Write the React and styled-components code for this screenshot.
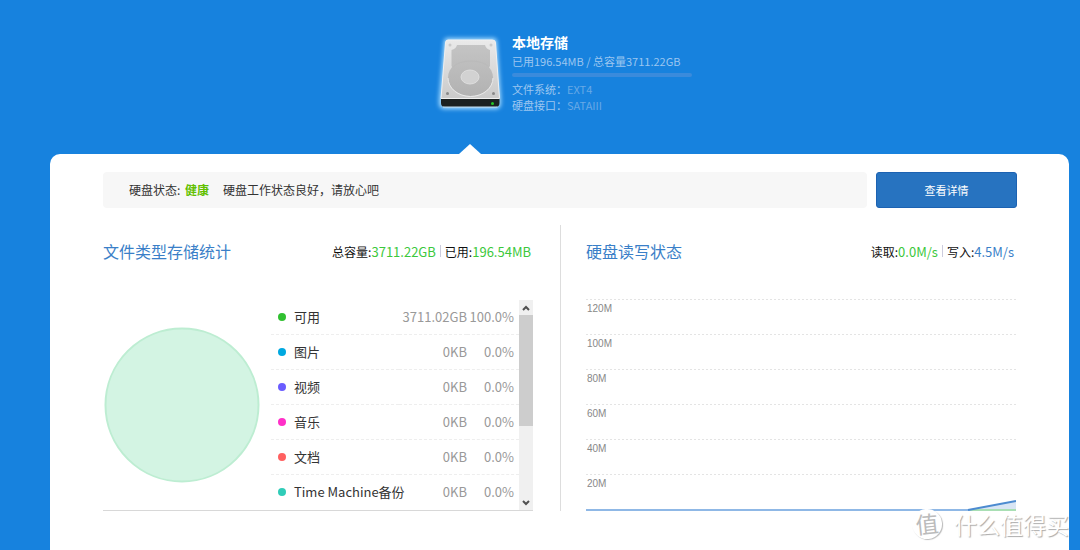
import React, { useState } from 'react';
import styled, { createGlobalStyle } from 'styled-components';

const fileTypes = [
    { name: '可用', size: '3711.02GB', percent: '100.0%', color: '#30c030' },
    { name: '图片', size: '0KB', percent: '0.0%', color: '#00a8e0' },
    { name: '视频', size: '0KB', percent: '0.0%', color: '#6a5cff' },
    { name: '音乐', size: '0KB', percent: '0.0%', color: '#ff30c8' },
    { name: '文档', size: '0KB', percent: '0.0%', color: '#ff6060' },
    { name: 'Time Machine备份', size: '0KB', percent: '0.0%', color: '#30ccb8' },
];

const speedMarks = ['120M', '100M', '80M', '60M', '40M', '20M'];

function DiskIcon() {
    return (
        <svg width="72" height="84" viewBox="0 0 72 84" aria-hidden="true">
            <defs>
                <linearGradient id="case" x1="0" y1="0" x2="0" y2="1">
                    <stop offset="0" stopColor="#eaeaea" />
                    <stop offset="0.5" stopColor="#dadada" />
                    <stop offset="1" stopColor="#cacaca" />
                </linearGradient>
                <linearGradient id="plate" gradientUnits="userSpaceOnUse" x1="0" y1="13" x2="0" y2="64">
                    <stop offset="0" stopColor="#c4c4c4" />
                    <stop offset="1" stopColor="#b2b2b2" />
                </linearGradient>
                <filter id="glow" x="-20%" y="-20%" width="140%" height="140%">
                    <feGaussianBlur stdDeviation="2" />
                </filter>
            </defs>
            <path d="M14 7H59Q62 7 62 10L66 67V71Q66 76 61 76H11Q6 76 6 71V67L11 10Q11 7 14 7Z" fill="#a8dcff" stroke="#a8dcff" strokeWidth="2" filter="url(#glow)" />
            <path d="M7 65H65.500V71Q65.500 75 61.500 75H11Q7 75 7 71Z" fill="#1b2020" />
            <path d="M9 75H63.500" stroke="#c8e0f0" />
            <path d="M14 8H58.500Q61.500 8 61.500 11L65.500 66.500H7L11.500 11Q11.500 8 14 8Z" fill="url(#case)" stroke="#f0f0f0" />
            <ellipse cx="36.500" cy="45.500" rx="22.500" ry="18.500" fill="url(#plate)" />
            <path d="M14 46A22.500 18.500 0 0 0 59 46" fill="none" stroke="#e8e8e8" />
            <path d="M23 13H51Q52 17 56 18V34Q54 38 50 40H23Q19 38 17.500 34V18Q22 17 23 13Z" fill="url(#plate)" />
            <path d="M19 35Q25 29 37 29T55 35" fill="none" stroke="#bababa" />
            <ellipse cx="36" cy="45" rx="9" ry="7" fill="#d2d2d2" stroke="#dedede" />
            <circle cx="16" cy="13" r="1.500" fill="#cacaca" />
            <circle cx="57" cy="13" r="1.500" fill="#cacaca" />
            <circle cx="13.500" cy="61.500" r="1.500" fill="#888" />
            <circle cx="59.500" cy="61.500" r="1.500" fill="#888" />
            <circle cx="58.500" cy="71.500" r="1.500" fill="#24c624" />
        </svg>
    );
}

function FileStats() {
    return (
        <StatsBody>
            <PieBox>
                <svg width="156" height="156" viewBox="0 0 156 156" role="img" aria-label="可用 100.0%">
                    <circle cx="78" cy="78" r="76.500" fill="#d3f4e3" stroke="#bdedd2" strokeWidth="2" />
                </svg>
            </PieBox>
            <TypeTable>
                <tbody>
                    {fileTypes.map((t) => (
                        <tr key={t.name}>
                            <TypeName scope="row"><Dot $color={t.color} />{t.name}</TypeName>
                            <TypeValue $width="68px">{t.size}</TypeValue>
                            <TypeValue $width="52px">{t.percent}</TypeValue>
                        </tr>
                    ))}
                </tbody>
            </TypeTable>
            <ScrollBar>
                <ScrollButton type="button" aria-label="向上">
                    <svg width="8" height="6" viewBox="0 0 8 6"><path d="M1 5L4 2L7 5" /></svg>
                </ScrollButton>
                <Thumb />
                <ScrollButton type="button" aria-label="向下">
                    <svg width="8" height="6" viewBox="0 0 8 6"><path d="M1 1L4 4L7 1" /></svg>
                </ScrollButton>
            </ScrollBar>
        </StatsBody>
    );
}

function SpeedChart() {
    return (
        <Chart>
            {speedMarks.map((m) => <Mark key={m}>{m}</Mark>)}
            <ChartLine viewBox="0 0 430 212" preserveAspectRatio="none" aria-hidden="true">
                <path d="M382 211L430 202V211Z" fill="#d8e5f4" />
                <path d="M382 211H430" stroke="#a9dfb4" strokeWidth="2" />
                <path d="M0 211H384" stroke="#8fb8e6" strokeWidth="2" />
                <path d="M382 211L430 202" stroke="#4c8bd0" strokeWidth="2" />
            </ChartLine>
        </Chart>
    );
}

export default function App() {

    const [details, setDetails] = useState(false)

    return (
        <Page>
            <GlobalStyle />
            <Header>
                <DiskColumn>
                    <DiskIcon />
                    <Arrow />
                </DiskColumn>
                <DiskInfo>
                    <DiskName>本地存储</DiskName>
                    <InfoLine>已用196.54MB / 总容量3711.22GB</InfoLine>
                    <UsageBar />
                    <InfoLine>文件系统：<span>EXT4</span></InfoLine>
                    <InfoLine>硬盘接口：<span>SATAIII</span></InfoLine>
                </DiskInfo>
            </Header>

            <Panel>
                <StatusRow>
                    <StatusBar>
                        硬盘状态: <b>健康</b>
                        <span>硬盘工作状态良好，请放心吧</span>
                    </StatusBar>
                    <DetailButton type="button" aria-pressed={details} onClick={() => setDetails(!details)}>
                        查看详情
                    </DetailButton>
                </StatusRow>

                <Columns>
                    <Column $left>
                        <ColumnHead>
                            <h2>文件类型存储统计</h2>
                            <Figures>
                                总容量:<Figure>3711.22GB</Figure>
                                <Separator />
                                已用:<Figure>196.54MB</Figure>
                            </Figures>
                        </ColumnHead>
                        <FileStats />
                    </Column>
                    <Column>
                        <ColumnHead>
                            <h2>硬盘读写状态</h2>
                            <Figures>
                                读取:<Figure>0.0M/s</Figure>
                                <Separator />
                                写入:<Figure $blue>4.5M/s</Figure>
                            </Figures>
                        </ColumnHead>
                        <SpeedChart />
                    </Column>
                </Columns>
            </Panel>

            <Watermark>
                <Seal>值</Seal>
                什么值得买
            </Watermark>
        </Page>
    );
}

const GlobalStyle = createGlobalStyle`
* {
    box-sizing: border-box;
}
body {
    margin: 0;
    background: #1782de;
    font-family: "Noto Sans CJK SC", sans-serif;
    font-size: 12px;
    color: #333;
}
`;

const Page = styled.div`
    position: relative;
    display: flex;
    flex-direction: column;
    min-height: 100vh;
    overflow: hidden;
`;

const Header = styled.header`
    display: flex;
    justify-content: center;
    gap: 6px;
    height: 154px;
    padding: 32px 0 0 46px;
`;

const DiskColumn = styled.div`
    display: flex;
    flex-direction: column;
    align-items: center;
    justify-content: space-between;
`;

const Arrow = styled.div`
    border: 11px solid transparent;
    border-top: 0;
    border-bottom-color: #fff;
    border-bottom-width: 10px;
`;

const DiskInfo = styled.div`
    width: 180px;
`;

const DiskName = styled.h1`
    margin: 0;
    font-size: 14px;
    line-height: 21px;
    color: #fff;
`;

const InfoLine = styled.p`
    margin: 0;
    font-size: 11px;
    line-height: 16px;
    color: #9cc6f0;
    white-space: nowrap;

    span {
        color: #68a9e6;
    }
`;

const UsageBar = styled.div`
    height: 4px;
    margin: 4px 0 4px;
    border-radius: 2px;
    background: #3a8bdc;
`;

const Panel = styled.main`
    flex: 1;
    margin: 0 11px 0 50px;
    padding: 18px 52px 18px 53px;
    border-radius: 10px 10px 0 0;
    background: #fff;
`;

const StatusRow = styled.div`
    display: flex;
    gap: 9px;
    margin-bottom: 17px;
`;

const StatusBar = styled.div`
    flex: 1;
    height: 36px;
    padding: 0 26px;
    border-radius: 4px;
    background: #f7f7f7;
    line-height: 36px;

    b {
        margin-left: 2px;
        color: #62c000;
    }
    span {
        margin-left: 14px;
    }
`;

const DetailButton = styled.button`
    width: 141px;
    height: 36px;
    border: 1px solid #1c62b2;
    border-radius: 3px;
    background: #2773c0;
    color: #fff;
    font-family: inherit;
    font-size: 11px;
    cursor: pointer;
`;

const Columns = styled.div`
    display: flex;
    padding-right: 1px;
`;

const Column = styled.section`
    flex: 1;
    min-width: 0;
    padding: ${(p) => (p.$left ? '0 27px 0 0' : '0 0 0 25px')};
    border-right: ${(p) => (p.$left ? '1px solid #ddd' : '0')};
`;

const ColumnHead = styled.div`
    display: flex;
    justify-content: space-between;
    align-items: center;
    height: 74px;
    padding: 0 2px 22px 0;

    h2 {
        margin: 0;
        font-size: 16px;
        font-weight: normal;
        color: #3a7fc8;
    }
`;

const Figures = styled.div`
    display: flex;
    align-items: center;
    color: #111;
`;

const Figure = styled.span`
    font-size: 13px;
    color: ${(p) => (p.$blue ? '#3a7fc8' : '#3cc83c')};
`;

const Separator = styled.i`
    width: 1px;
    height: 12px;
    margin: 0 4px;
    background: #ccd;
`;

const StatsBody = styled.div`
    display: flex;
    height: 212px;
    border-bottom: 1px solid #d8d8d8;
`;

const PieBox = styled.div`
    width: 168px;
    padding: 28px 0 0 1px;
`;

const TypeTable = styled.table`
    flex: 1;
    align-self: flex-start;
    height: 210px;
    width: 0;
    table-layout: fixed;
    border-collapse: collapse;

    tr {
        height: 35px;
        border-bottom: 1px dashed #eee;
    }
    tr:last-child {
        border-bottom: 0;
    }
    th, td {
        padding: 0;
    }
`;

const TypeName = styled.th`
    font-weight: normal;
    font-size: 13px;
    text-align: left;
    white-space: nowrap;
`;

const Dot = styled.i`
    display: inline-block;
    width: 8px;
    height: 8px;
    margin: 0 8px 1px 7px;
    border-radius: 50%;
    background: ${(p) => p.$color};
`;

const TypeValue = styled.td`
    width: ${(p) => p.$width};
    font-size: 13px;
    text-align: right;
    color: #999;

    &:last-child {
        padding-right: 5px;
    }
`;

const ScrollBar = styled.div`
    display: flex;
    flex-direction: column;
    width: 14px;
    margin-top: 1px;
    background: #f0f0f0;
`;

const ScrollButton = styled.button`
    display: flex;
    align-items: center;
    justify-content: center;
    height: 15px;
    padding: 0;
    border: 0;
    background: #f0f0f0;

    &:last-child {
        margin-top: auto;
    }
    path {
        fill: none;
        stroke: #505050;
        stroke-width: 2;
    }
`;

const Thumb = styled.div`
    height: 111px;
    background: #cdcdcd;
`;

const Chart = styled.div`
    position: relative;
    height: 212px;
`;

const Mark = styled.div`
    height: 35px;
    padding: 2px 1px;
    background: repeating-linear-gradient(90deg, #e4e4e4 0 2px, transparent 2px 4px) top / 100% 1px no-repeat;
    font-family: "Liberation Sans", Arial, sans-serif;
    font-size: 10px;
    line-height: 15px;
    color: #888;
`;

/* speed curve lies over the grid */
const ChartLine = styled.svg`
    position: absolute;
    top: 0;
    left: 0;
    width: 100%;
    height: 212px;
`;

const Watermark = styled.div`
    position: absolute;
    right: 11px;
    bottom: 10px;
    display: flex;
    align-items: center;
    gap: 12px;
    font-size: 23px;
    line-height: 32px;
    color: #fff;
    text-shadow: 1px 1px 1px #aaa;
`;

const Seal = styled.span`
    width: 30px;
    height: 30px;
    border-radius: 50%;
    background: #fff;
    box-shadow: 1px 1px 1px #bbb;
    font-size: 23px;
    line-height: 28px;
    text-align: center;
    color: #bbb;
    text-shadow: none;
    transform: rotate(-6deg);
`;
